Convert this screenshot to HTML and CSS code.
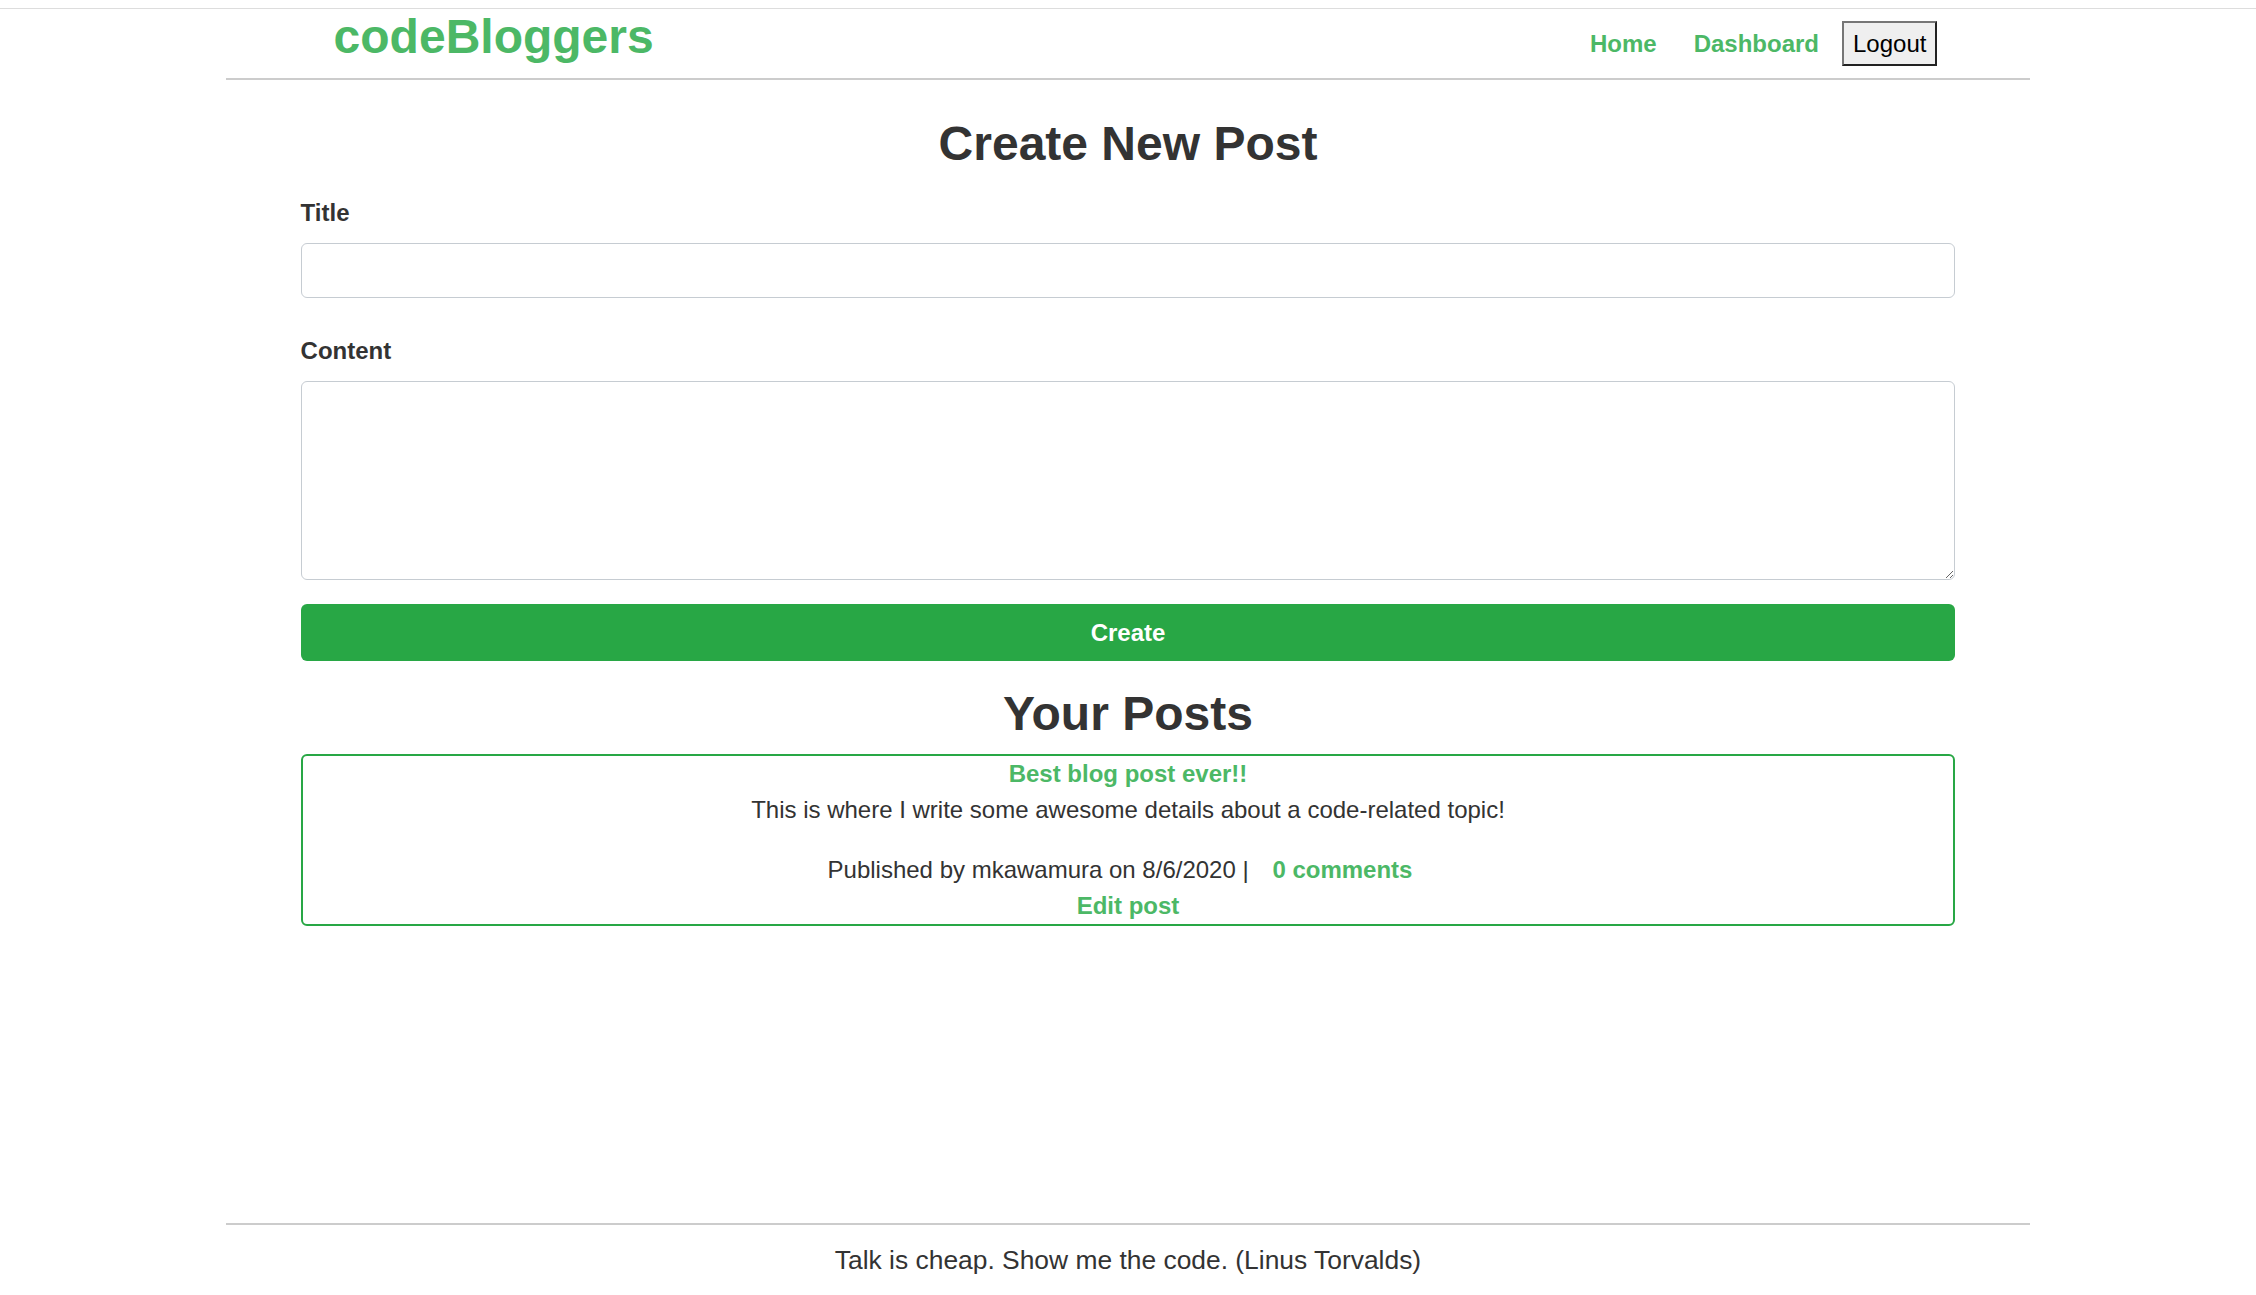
FILE: index.html
```html
<!DOCTYPE html>
<html lang="en">
<head>
<meta charset="utf-8">
<title>codeBloggers</title>
<link rel="stylesheet" href="styles.css">
</head>
<body>
<div class="page">
  <div class="topline"></div>
  <header class="site-header">
    <a class="logo" href="#">codeBloggers</a>
    <nav class="nav">
      <a class="nav-link" href="#">Home</a>
      <a class="nav-link nav-link-last" href="#">Dashboard</a>
      <button class="logout" type="button">Logout</button>
    </nav>
  </header>
  <main class="main">
    <h1 class="page-title">Create New Post</h1>
    <form class="post-form">
      <div class="form-group">
        <label class="form-label" for="title">Title</label>
        <input class="form-input" id="title" type="text">
      </div>
      <div class="form-group form-group-second">
        <label class="form-label" for="content">Content</label>
        <textarea class="form-textarea" id="content"></textarea>
      </div>
      <button class="create-btn" type="submit">Create</button>
    </form>
    <h2 class="section-title">Your Posts</h2>
    <article class="post-card">
      <a class="post-title" href="#">Best blog post ever!!</a>
      <p class="post-body">This is where I write some awesome details about a code-related topic!</p>
      <div class="post-meta">Published by mkawamura on 8/6/2020 | <a class="comments-link" href="#">0 comments</a></div>
      <a class="edit-link" href="#">Edit post</a>
    </article>
  </main>
  <footer class="site-footer">Talk is cheap. Show me the code. (Linus Torvalds)</footer>
</div>
</body>
</html>
```
FILE: styles.css
```css
* {
  box-sizing: border-box;
}

html, body {
  margin: 0;
  padding: 0;
  background: #fff;
}

body {
  font-family: "Liberation Sans", Arial, sans-serif;
  color: #333;
  font-size: 24px;
}

a {
  text-decoration: none;
  color: #4cb866;
}

.page {
  display: flex;
  flex-direction: column;
  min-height: 100vh;
}

.topline {
  height: 9px;
  border-bottom: 1px solid #dddddd;
}

.site-header {
  width: 80%;
  margin: 0 auto;
  height: 71px;
  border-bottom: 2px solid #cccccc;
  display: flex;
  justify-content: space-between;
  align-items: flex-start;
  padding: 0 93px 0 108px;
}

.logo {
  font-size: 48px;
  font-weight: bold;
  line-height: 48px;
  margin-top: 4px;
  color: #4cb866;
}

.nav {
  display: flex;
  align-items: baseline;
  margin-top: 12px;
}

.nav-link {
  font-size: 24px;
  font-weight: bold;
  margin-right: 37px;
}

.nav-link-last {
  margin-right: 23px;
}

.logout {
  font-family: "Liberation Sans", Arial, sans-serif;
  font-size: 24px;
  line-height: 27px;
  padding: 7px 9px;
  color: #000;
  background: #efefef;
  border: 2px solid;
  border-color: #767676 #222 #222 #767676;
  border-radius: 0;
}

.main {
  flex: 1;
  width: 80%;
  margin: 0 auto;
  padding: 0 75px;
}

.page-title {
  margin: 36px 0 0;
  font-size: 48px;
  line-height: 56px;
  text-align: center;
  font-weight: bold;
}

.post-form {
  margin-top: 23px;
}

.form-group-second {
  margin-top: 35px;
}

.form-label {
  display: block;
  font-weight: bold;
  font-size: 24px;
  line-height: 36px;
  margin-bottom: 12px;
}

.form-input,
.form-textarea {
  display: block;
  width: 100%;
  border: 1px solid #c6ccd2;
  border-radius: 6px;
  font-family: "Liberation Sans", Arial, sans-serif;
  font-size: 24px;
  padding: 9px 18px;
  background: #fff;
  color: #495057;
}

.form-input {
  height: 55px;
}

.form-textarea {
  height: 199px;
  resize: vertical;
}

.create-btn {
  display: block;
  width: 100%;
  height: 57px;
  margin-top: 24px;
  border: none;
  border-radius: 6px;
  background: #28a745;
  color: #fff;
  font-family: "Liberation Sans", Arial, sans-serif;
  font-size: 24px;
  font-weight: bold;
}

.section-title {
  margin: 25px 0 12px;
  font-size: 48px;
  line-height: 56px;
  text-align: center;
  font-weight: bold;
}

.post-card {
  border: 2px solid #28a745;
  border-radius: 6px;
  text-align: center;
  font-size: 24px;
  line-height: 36px;
}

.post-title,
.edit-link {
  display: block;
  font-weight: bold;
}

.post-body {
  margin: 0 0 24px;
}

.comments-link {
  font-weight: bold;
  margin: 0 16px 0 17px;
}

.site-footer {
  width: 80%;
  margin: 0 auto;
  border-top: 2px solid #cccccc;
  padding: 16px 0 15px;
  font-size: 26.4px;
  line-height: 39px;
  text-align: center;
}
```
